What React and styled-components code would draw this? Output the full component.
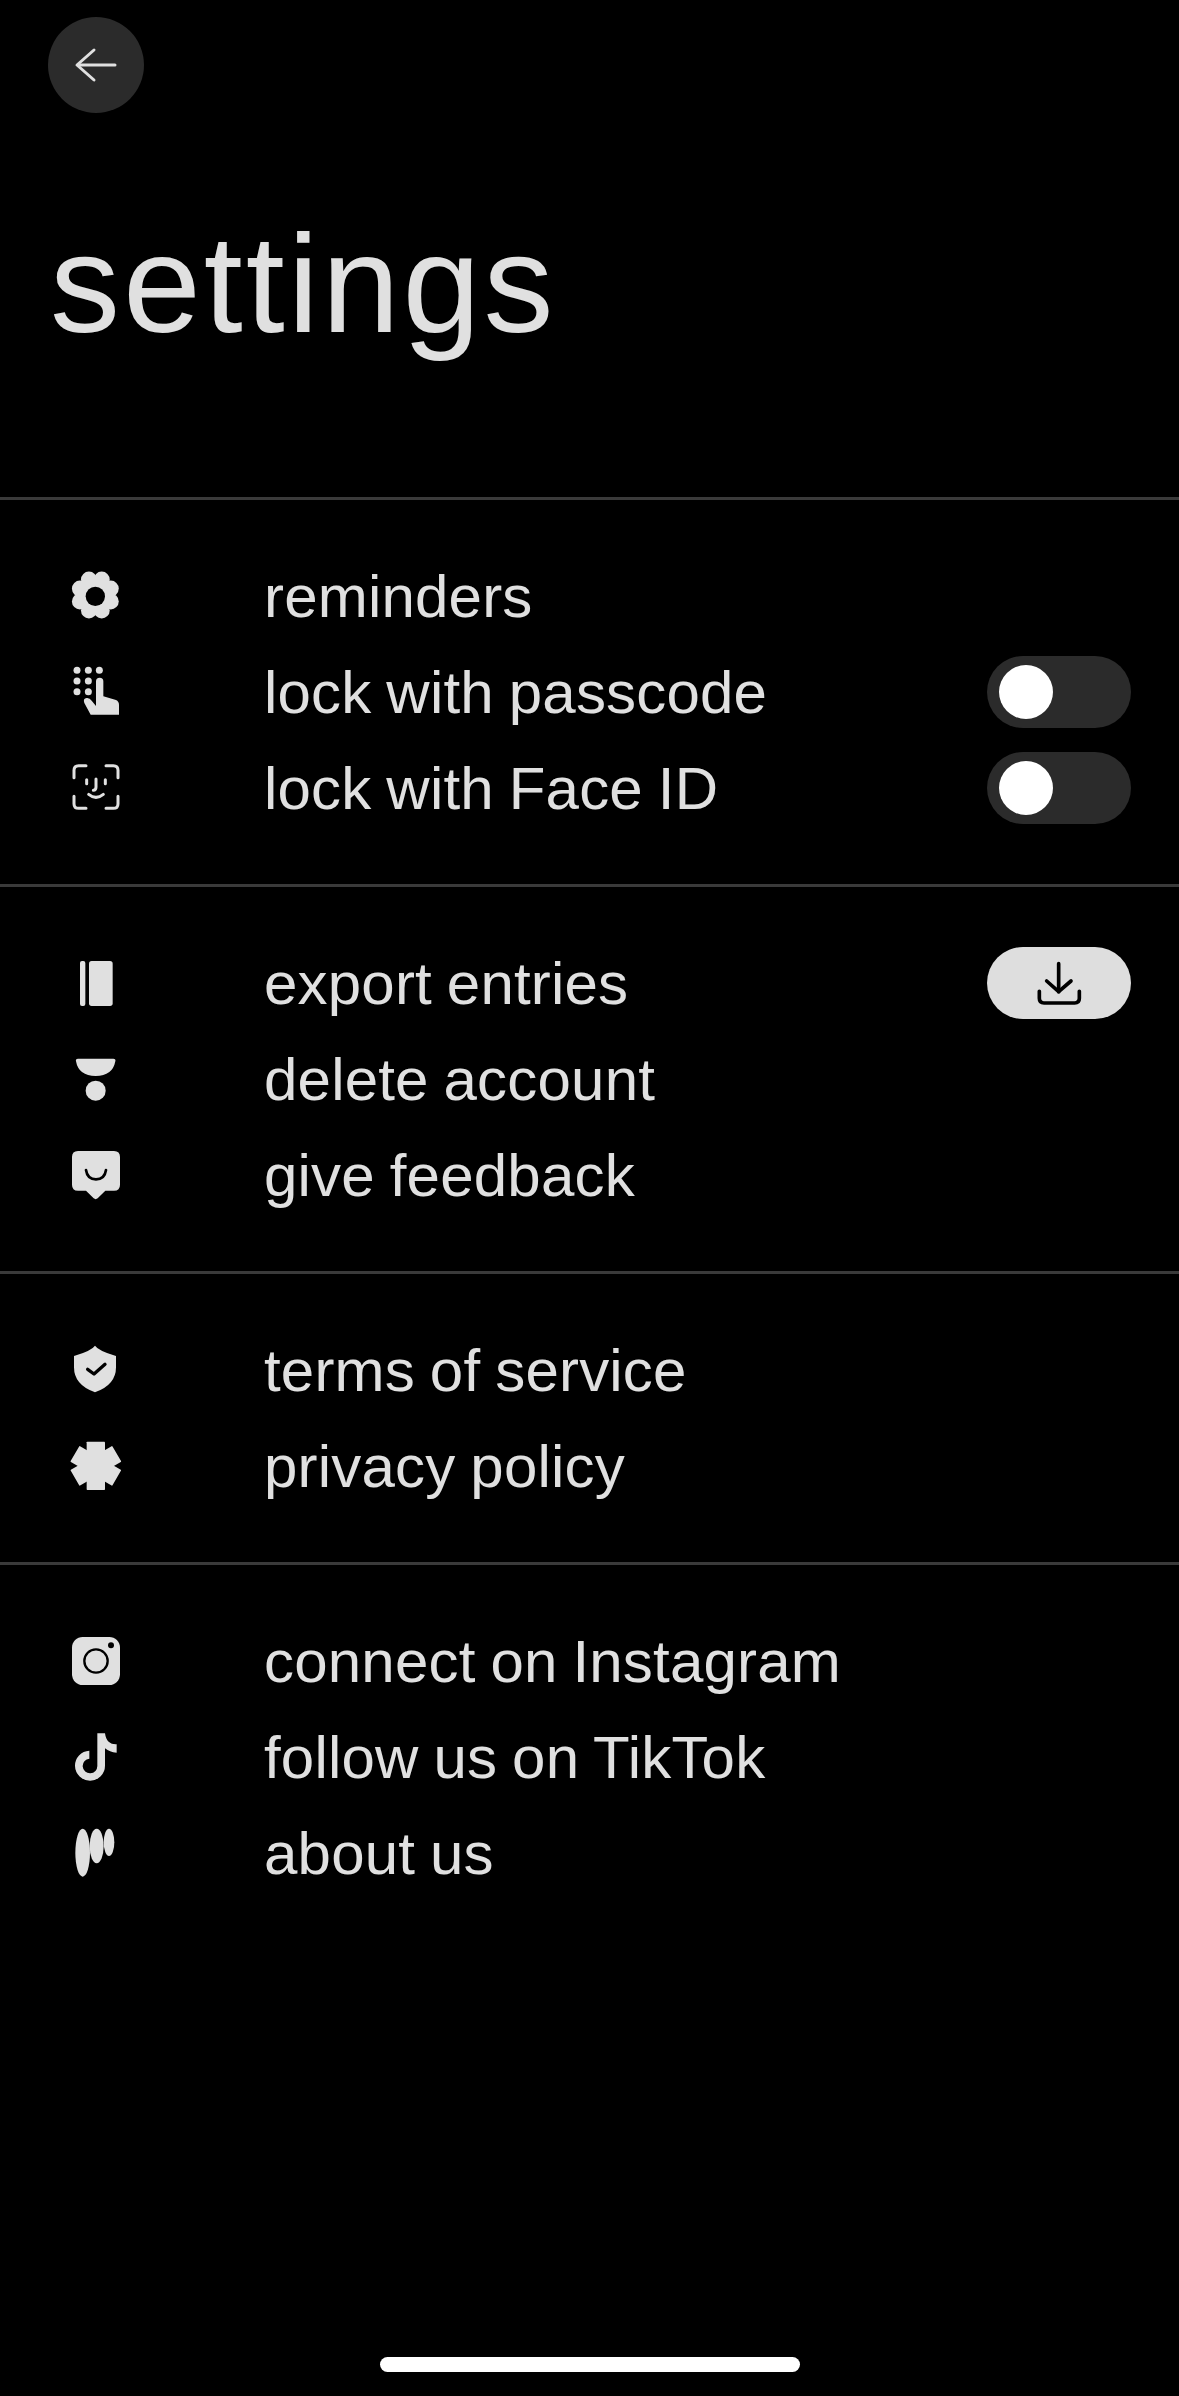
import React from 'react';
import styled, { createGlobalStyle } from 'styled-components';

const GlobalStyle = createGlobalStyle`
  html, body {
    margin: 0;
    padding: 0;
    background: #000;
  }
`;

const Page = styled.div`
  width: 1179px;
  height: 2396px;
  background: #000;
  color: #e0e0e0;
  font-family: "Liberation Sans", Arial, sans-serif;
  display: flex;
  flex-direction: column;
  overflow: hidden;
`;

const TopBar = styled.header`
  padding: 17px 48px 0;
`;

const BackButton = styled.button`
  width: 96px;
  height: 96px;
  padding: 0;
  border: none;
  border-radius: 50%;
  background: #2b2b2b;
  display: flex;
  align-items: center;
  justify-content: center;
`;

const Title = styled.h1`
  margin: 0;
  padding: 0 0 0 50px;
  height: 384px;
  line-height: 342px;
  font-size: 140px;
  font-weight: 400;
  letter-spacing: 3px;
`;

const Section = styled.section`
  border-top: 3px solid #3a3a3a;
  padding: 48px 0;
`;

const Row = styled.div`
  height: 96px;
  display: flex;
  align-items: center;
  padding: 0 48px;
`;

const IconSlot = styled.span`
  width: 96px;
  height: 60px;
  margin-right: 120px;
  display: flex;
  justify-content: center;
  flex-shrink: 0;
`;

const Label = styled.span`
  flex: 1;
  font-size: 60px;
  letter-spacing: 0.2px;
  word-spacing: -2px;
`;

const Toggle = styled.div`
  width: 144px;
  height: 72px;
  box-sizing: border-box;
  padding-left: 12px;
  border-radius: 36px;
  background: #2b2b2b;
  display: flex;
  align-items: center;
`;

const Knob = styled.div`
  width: 54px;
  height: 54px;
  border-radius: 50%;
  background: #fff;
`;

const DownloadButton = styled.button`
  width: 144px;
  height: 72px;
  padding: 0;
  border: none;
  border-radius: 36px;
  background: #dedede;
  display: flex;
  align-items: center;
  justify-content: center;
`;

const Spacer = styled.div`
  flex: 1;
`;

const HomeBar = styled.div`
  width: 420px;
  height: 15px;
  margin: 0 auto 24px;
  border-radius: 8px;
  background: #fff;
`;

const ink = '#e0e0e0';

// every glyph is drawn on a 180 unit square, which is 60px on the page
const Glyph = ({ box, size = 60, children }) => (
  <svg width={size} height={size} viewBox={box} fill={ink} xmlns="http://www.w3.org/2000/svg">
    {children}
  </svg>
);

const lobes = [0, 45, 90, 135, 180, 225, 270, 315];

const GearIcon = () => (
  <Glyph box="78 21 180 180">
    <circle cx="166" cy="108" r="52" />
    {lobes.map((a) => (
      <circle
        key={a}
        cx={166 + 50 * Math.cos(((a + 22.5) * Math.PI) / 180)}
        cy={108 + 50 * Math.sin(((a + 22.5) * Math.PI) / 180)}
        r="24"
      />
    ))}
    <circle cx="166" cy="112" r="29" fill="#000" />
  </Glyph>
);

const KeypadIcon = () => (
  <Glyph box="78 309 180 180">
    {[[111, 334], [145, 334], [178, 334], [111, 366], [145, 366], [111, 398], [145, 398]].map(([x, y]) => (
      <circle key={`${x}-${y}`} cx={x} cy={y} r="10.5" />
    ))}
    <path d="M168 367a11 11 0 0 1 22 0V412L228 423Q237 427 237 438V467H152L133 432Q128 419 140 417Q149 416 155 425L168 441Z" />
  </Glyph>
);

const FaceIcon = () => (
  <Glyph box="78 597 180 180">
    <g fill="none" stroke={ink} strokeWidth="9" strokeLinecap="round">
      <path d="M102 656V634Q102 620 116 620H138" />
      <path d="M198 620H220Q234 620 234 634V656" />
      <path d="M102 712V734Q102 748 116 748H138" />
      <path d="M198 748H220Q234 748 234 734V712" />
      <path d="M140 662V674" />
      <path d="M196 662V674" />
      <path d="M168 660V684Q168 694 160 694" />
      <path d="M146 706Q168 724 190 706" />
    </g>
  </Glyph>
);

const BookIcon = () => (
  <Glyph box="78 9 180 180">
    <rect x="120" y="33" width="16" height="135" rx="6" />
    <rect x="147" y="33" width="71" height="135" rx="8" />
  </Glyph>
);

const TrashIcon = () => (
  <Glyph box="78 297 180 180">
    <path d="M114 326H220Q228 326 226 334Q218 378 167 378Q116 378 108 334Q106 326 114 326Z" />
    <circle cx="167" cy="422" r="30" />
  </Glyph>
);

const FeedbackIcon = () => (
  <Glyph box="78 585 180 180">
    <path d="M114 603H222Q240 603 240 621V704Q240 722 222 722H196L173 745Q167 750 161 745L138 722H114Q96 722 96 704V621Q96 603 114 603Z" />
    <path d="M138 660Q142 688 168 688Q194 688 198 660" fill="none" stroke="#000" strokeWidth="8" strokeLinecap="round" />
  </Glyph>
);

const ShieldIcon = () => (
  <Glyph box="78 30 180 180">
    <path d="M165 47Q175 62 228 78V112Q228 165 165 187Q102 165 102 112V78Q155 62 165 47Z" />
    <path d="M143 118L162 132L195 103" fill="none" stroke="#000" strokeWidth="10" strokeLinecap="round" strokeLinejoin="round" />
  </Glyph>
);

const BadgeIcon = () => (
  <Glyph box="78 318 180 180">
    {[0, 60, 120].map((a) => (
      <rect key={a} x="140" y="335" width="55" height="145" rx="2" transform={`rotate(${a} 167.5 407.5)`} />
    ))}
  </Glyph>
);

const InstagramIcon = () => (
  <Glyph box="78 3 180 180">
    <rect x="96" y="21" width="144" height="144" rx="32" />
    <circle cx="168" cy="93" r="35" fill="none" stroke="#000" strokeWidth="7" />
    <circle cx="213" cy="46" r="9" fill="#000" />
  </Glyph>
);

const TikTokIcon = () => (
  <Glyph box="78 291 180 180">
    <path d="M172 310H195C198 335 212 344 230 343V368C215 368 205 362 195 355V407A45 45 0 1 1 148 362V386A22 22 0 1 0 172 407Z" />
  </Glyph>
);

const LogoIcon = () => (
  <Glyph box="78 579 180 180">
    <ellipse cx="128" cy="668" rx="22" ry="72" />
    <ellipse cx="170" cy="648" rx="21" ry="52" />
    <ellipse cx="207" cy="637" rx="16" ry="41" />
  </Glyph>
);

const BackArrow = () => (
  <svg width="48" height="40" viewBox="0 0 48 40" fill="none" stroke={ink} strokeWidth="3" strokeLinecap="round" strokeLinejoin="round">
    <path d="M43 20H6" />
    <path d="M22 5L5 20L22 35" />
  </svg>
);

const DownloadIcon = () => (
  <svg width="60" height="60" viewBox="207 938 180 180" fill="none" stroke="#000" strokeWidth="11" strokeLinecap="round" strokeLinejoin="round">
    <path d="M296 970V1054" />
    <path d="M260 1022L296 1054L333 1022" />
    <path d="M238 1053V1074Q238 1088 252 1088H344Q358 1088 358 1074V1053" />
  </svg>
);

const sections = [
  [
    { label: 'reminders', icon: GearIcon },
    { label: 'lock with passcode', icon: KeypadIcon, control: 'toggle' },
    { label: 'lock with Face ID', icon: FaceIcon, control: 'toggle' },
  ],
  [
    { label: 'export entries', icon: BookIcon, control: 'download' },
    { label: 'delete account', icon: TrashIcon },
    { label: 'give feedback', icon: FeedbackIcon },
  ],
  [
    { label: 'terms of service', icon: ShieldIcon },
    { label: 'privacy policy', icon: BadgeIcon },
  ],
  [
    { label: 'connect on Instagram', icon: InstagramIcon },
    { label: 'follow us on TikTok', icon: TikTokIcon },
    { label: 'about us', icon: LogoIcon },
  ],
];

function App() {
  return (
    <Page>
      <GlobalStyle />
      <TopBar>
        <BackButton aria-label="back">
          <BackArrow />
        </BackButton>
      </TopBar>
      <Title>settings</Title>
      {sections.map((rows) => (
        <Section key={rows[0].label}>
          {rows.map(({ label, icon: Icon, control }) => (
            <Row key={label}>
              <IconSlot>
                <Icon />
              </IconSlot>
              <Label>{label}</Label>
              {control === 'toggle' && (
                <Toggle>
                  <Knob />
                </Toggle>
              )}
              {control === 'download' && (
                <DownloadButton aria-label="export">
                  <DownloadIcon />
                </DownloadButton>
              )}
            </Row>
          ))}
        </Section>
      ))}
      <Spacer />
      <HomeBar />
    </Page>
  );
}

export default App;
